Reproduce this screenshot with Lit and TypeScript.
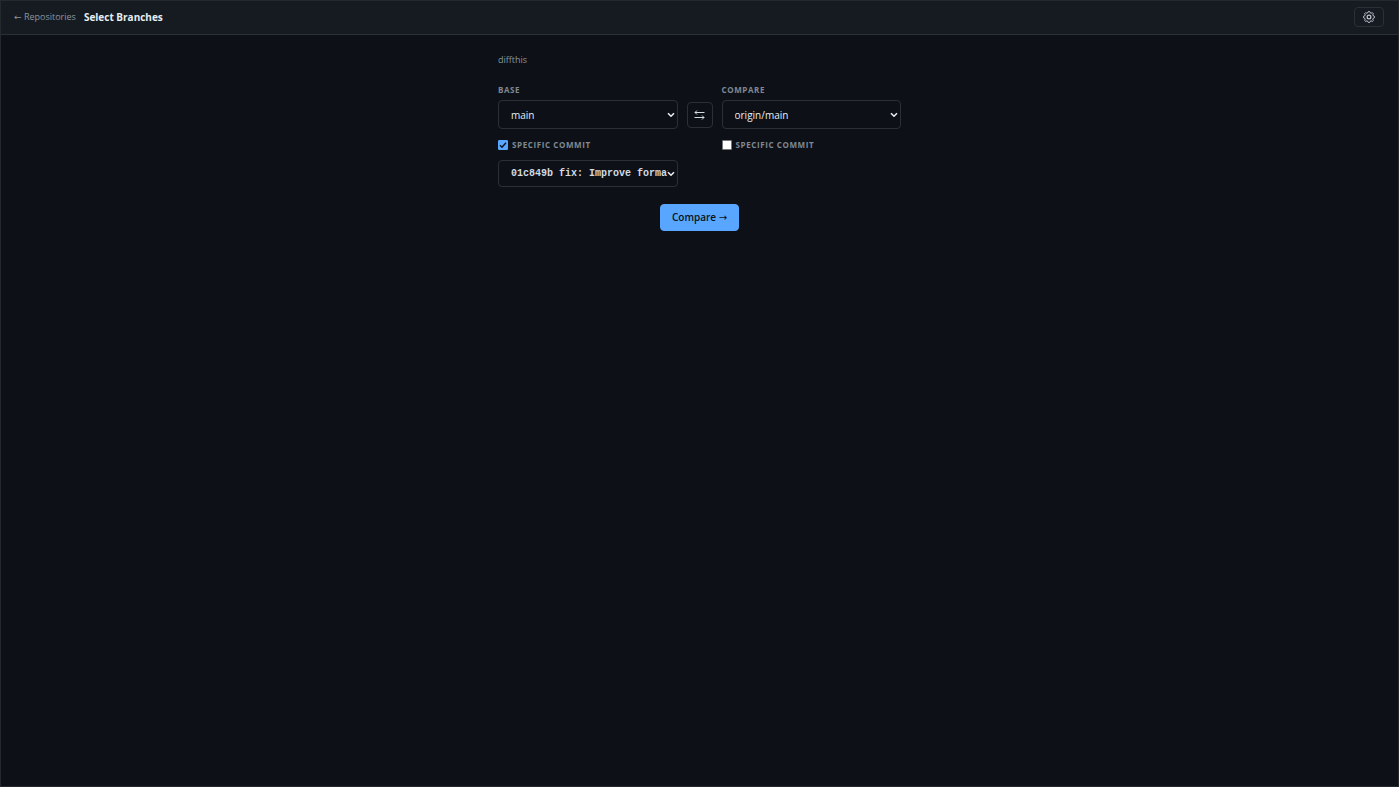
import { LitElement, html, css } from "lit";
import { customElement, state } from "lit/decorators.js";

@customElement("app-root")
export class AppRoot extends LitElement {
  @state() private baseCommit = true;
  @state() private compareCommit = false;

  static styles = css`
    :host {
      display: block;
      box-sizing: border-box;
      min-height: 100vh;
      border: 1px solid #25282e;
      background: #0d1117;
      color: #e6edf3;
      font-family: "Open Sans", "Liberation Sans", sans-serif;
      font-size: 10px;
      line-height: 16px;
    }
    * {
      box-sizing: border-box;
    }
    .header {
      display: flex;
      align-items: center;
      gap: 8px;
      height: 34px;
      padding: 0 14px 1px 13px;
      background: #161b22;
      border-bottom: 1px solid #2b3038;
    }
    .back {
      color: #8b949e;
      text-decoration: none;
      font-size: 9px;
    }
    .arrow {
      font-family: "DejaVu Sans", sans-serif;
      font-weight: 400;
    }
    .title {
      flex: 1;
      margin: 0;
      font-size: 10px;
      font-weight: 700;
    }
    button,
    select {
      font: inherit;
      color: inherit;
      margin: 0;
      background-color: transparent;
      border: 1px solid #2b3038;
      border-radius: 4px;
    }
    .settings {
      display: grid;
      place-items: center;
      width: 30px;
      height: 20px;
      padding: 0;
      color: #c2c9d1;
    }
    .main {
      max-width: 403px;
      margin: 0 auto;
      padding-top: 17px;
    }
    .repo {
      margin: 0 0 14px;
      color: #8b949e;
      font-size: 9px;
    }
    .grid {
      display: grid;
      grid-template-columns: minmax(0, 1fr) 26px minmax(0, 1fr);
      column-gap: 9px;
      align-items: start;
    }
    .side {
      display: flex;
      flex-direction: column;
    }
    .label {
      color: #7f8894;
      font-size: 8px;
      font-weight: 700;
      letter-spacing: 0.6px;
      text-transform: uppercase;
    }
    .name {
      margin-bottom: 2px;
    }
    .select {
      appearance: none;
      width: 100%;
      height: 29px;
      padding: 0 9px 0 12px;
      background: #0d1117
        url("data:image/svg+xml,%3Csvg xmlns='http://www.w3.org/2000/svg' width='8' height='6' viewBox='0 0 8 6'%3E%3Cpath d='M1 1.2 4 4.2 7 1.2' fill='none' stroke='%23e6edf3' stroke-width='1.6'/%3E%3C/svg%3E")
        no-repeat right 2px center;
    }
    .commit {
      height: 27px;
      font-family: "Liberation Mono", monospace;
      font-weight: 600;
      color: #d3dae1;
    }
    .check {
      display: flex;
      align-items: center;
      gap: 4px;
      margin: 8px 0 7px;
    }
    .box {
      appearance: none;
      width: 10px;
      height: 10px;
      margin: 0;
      border: 1px solid #767676;
      border-radius: 1px;
      background: #fff;
    }
    .box:checked {
      border-color: #58a6ff;
      background: #58a6ff
        url("data:image/svg+xml,%3Csvg xmlns='http://www.w3.org/2000/svg' viewBox='0 0 8 8'%3E%3Cpath d='M1 4.2 3 6.2 7 1.8' fill='none' stroke='%230d1117' stroke-width='1.4'/%3E%3C/svg%3E")
        center / 8px 8px;
    }
    .swap {
      display: grid;
      place-items: center;
      height: 26px;
      padding: 0;
      margin-top: 20px;
      color: #d3dae1;
    }
    .actions {
      display: flex;
      justify-content: center;
      margin-top: 17px;
    }
    .submit {
      height: 27px;
      padding: 0 11px;
      border-color: #58a6ff;
      background: #58a6ff;
      color: #0d1117;
      font-weight: 600;
    }
  `;

  render() {
    return html`
      <header class="header">
        <a class="back" href="#repositories"><span class="arrow">←</span> Repositories</a>
        <h1 class="title">Select Branches</h1>
        <button class="settings" aria-label="Settings">
          <svg width="12" height="12" viewBox="1 1 12 12" fill="none" stroke="currentColor" stroke-linejoin="round">
            <path d="M5.9 2.7 6.4 1.5h1.2l.5 1.2 1.1.5 1.2-.5.9.9-.5 1.2.5 1.1 1.2.5v1.3l-1.2.5-.5 1.1.5 1.2-.9.9-1.2-.5-1.1.5-.5 1.2H6.4l-.5-1.2-1.1-.5-1.2.5-.9-.9.5-1.2-.5-1.1-1.2-.5V6.4l1.2-.5.5-1.1-.5-1.2.9-.9 1.2.5z"/>
            <circle cx="7" cy="7" r="1.9" stroke-width="1.2"/>
          </svg>
        </button>
      </header>
      <main class="main">
        <p class="repo">diffthis</p>
        <div class="grid">
          <div class="side">
            <label class="label name" for="base">Base</label>
            <select class="select" id="base"><option>main</option></select>
            <label class="label check">
              <input class="box" type="checkbox" .checked=${this.baseCommit}
                @change=${(e: Event) => (this.baseCommit = (e.target as HTMLInputElement).checked)} />
              Specific commit
            </label>
            ${this.baseCommit ? this.commitSelect("Base commit") : ""}
          </div>
          <button class="swap" aria-label="Swap branches">
            <svg width="11" height="10" viewBox="0 0 11 10" fill="none" stroke="currentColor">
              <path d="M10.5 2.5H1M3 .5l-2 2 2 2M.5 7.5H10M8 5.5l2 2-2 2"/>
            </svg>
          </button>
          <div class="side">
            <label class="label name" for="compare">Compare</label>
            <select class="select" id="compare"><option>origin/main</option></select>
            <label class="label check">
              <input class="box" type="checkbox" .checked=${this.compareCommit}
                @change=${(e: Event) => (this.compareCommit = (e.target as HTMLInputElement).checked)} />
              Specific commit
            </label>
            ${this.compareCommit ? this.commitSelect("Compare commit") : ""}
          </div>
        </div>
        <div class="actions"><button class="submit">Compare <span class="arrow">→</span></button></div>
      </main>
    `;
  }

  private commitSelect(label: string) {
    return html`<select class="select commit" aria-label=${label}>
      <option>01c849b fix: Improve formatting</option>
    </select>`;
  }
}
